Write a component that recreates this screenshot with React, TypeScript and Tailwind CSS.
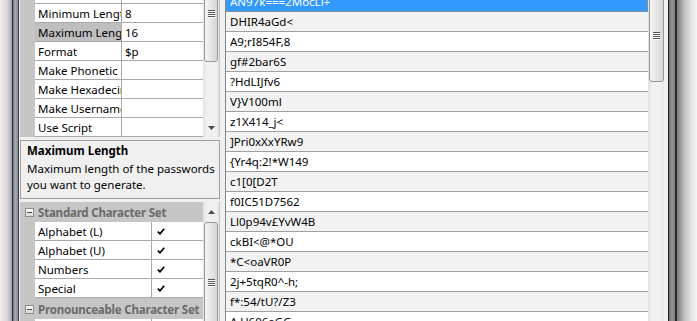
import React from 'react';

const passwords = [
  'AN97k===2MocLi+',
  'DHIR4aGd<',
  'A9;rI854F,8',
  'gf#2bar6S',
  '?HdLIJfv6',
  'V}V100ml',
  'z1X414_j<',
  ']Pri0xXxYRw9',
  '{Yr4q:2!*W149',
  'c1[0[D2T',
  'f0IC51D7562',
  'Ll0p94v£YvW4B',
  'ckBI<@*OU',
  '*C<oaVR0P',
  '2j+5tqR0^-h;',
  'f*:54/tU?/Z3',
  'A.U606aGG',
];

const general = [
  { name: '', value: '' },
  { name: 'Minimum Length', value: '8' },
  { name: 'Maximum Length', value: '16', selected: true },
  { name: 'Format', value: '$p' },
  { name: 'Make Phonetic', value: '' },
  { name: 'Make Hexadecimal', value: '' },
  { name: 'Make Username', value: '' },
  { name: 'Use Script', value: '' },
];

function Grip() {
  return (
    <div className="flex flex-col gap-px">
      {[0, 1, 2, 3].map((i) => (
        <div key={i} className="h-px w-[7px] bg-[#555] shadow-[0_1px_0_#fff]" />
      ))}
    </div>
  );
}

function Thumb({ className }: { className: string }) {
  return (
    <div
      className={`flex shrink-0 items-center justify-center rounded-[3px] border border-[#979797] bg-[linear-gradient(to_right,#f5f5f5,#e8e8e8_45%,#d6d6d6)] ${className}`}
    >
      <Grip />
    </div>
  );
}

function Arrow({ up }: { up?: boolean }) {
  return (
    <svg width="7" height="4" viewBox="0 0 7 4">
      <path d={up ? 'M0 4 L3.5 0 L7 4 Z' : 'M0 0 L3.5 4 L7 0 Z'} fill="#4d4d4d" />
    </svg>
  );
}

const track =
  'bg-[linear-gradient(to_right,#e3e3e3,#f1f1f1_25%,#f1f1f1_75%,#e7e7e7)]';

function Check() {
  return (
    <svg width="8" height="7" viewBox="0 0 8 7">
      <path d="M0.8 3.6 L3 5.8 L7.2 0.8" fill="none" stroke="#000" strokeWidth="1.7" />
    </svg>
  );
}

function Category({ label }: { label: string }) {
  return (
    <div className="flex h-[20px] shrink-0 items-center bg-[#c6c6c6]">
      <div className="ml-[5px] flex h-[9px] w-[9px] shrink-0 items-center justify-center border border-[#8e8e8e] bg-[linear-gradient(#fbfbfb,#dcdcdc)]">
        <div className="h-px w-[5px] bg-[#4a4a4a]" />
      </div>
      <span className="ml-[4px] whitespace-nowrap font-bold tracking-[-0.2px] text-[#6b6b6b]">{label}</span>
    </div>
  );
}

function CheckRow({ name }: { name: string }) {
  return (
    <div className="flex h-[19px] shrink-0">
      <div className="w-[15px] shrink-0 bg-[#c6c6c6]" />
      <div className="flex w-[117px] shrink-0 items-center border-r border-b border-[#a9a9a9] bg-white pl-[3px]">
        {name}
      </div>
      <div className="flex flex-1 items-center border-b border-[#a9a9a9] bg-white pl-[5px]">
        <Check />
      </div>
    </div>
  );
}

export default function App() {
  return (
    <div className="flex h-[321px] w-[697px] overflow-hidden bg-white text-[11.5px] leading-[15px] text-black font-['Noto_Sans',sans-serif]">
      {/* left shadow + frame */}
      <div className="w-[12px] shrink-0 bg-[linear-gradient(to_right,#eeeeee,#d8d8d8_60%,#a4a4a4)]" />
      <div className="w-px shrink-0 bg-[#2b2b2b]" />
      <div className="w-[5px] shrink-0 bg-[linear-gradient(to_right,#6f7684,#a3a9b3,#858b96)]" />
      <div className="w-px shrink-0 bg-[#3c3c3c]" />

      {/* client area */}
      <div className="flex w-[649px] shrink-0 bg-[#f0f0f0] pl-px">
        {/* left panel */}
        <div className="flex w-[200px] shrink-0 flex-col">
          {/* general grid */}
          <div className="flex h-[137px] shrink-0">
            <div className="flex flex-1 flex-col overflow-hidden">
              {general.map((r, i) => (
                <div key={i} className={`flex h-[19px] shrink-0 ${i === 0 ? 'mt-[-15px]' : ''}`}>
                  <div className="w-[15px] shrink-0 bg-[#c6c6c6]" />
                  <div
                    className={`flex w-[87px] shrink-0 items-center overflow-hidden whitespace-nowrap border-r border-b border-[#a9a9a9] pl-[3px] ${
                      r.selected ? 'bg-[#bfbfbf]' : 'bg-white'
                    }`}
                  >
                    {r.name}
                  </div>
                  <div className="flex flex-1 items-center border-b border-[#a9a9a9] bg-white pl-[3px]">
                    {r.value}
                  </div>
                </div>
              ))}
            </div>
            <div className={`flex w-[16px] shrink-0 flex-col overflow-hidden ${track}`}>
              <Thumb className="mt-[-36px] ml-px h-[98px] w-[14px]" />
              <div className="flex-1" />
              <div className="flex h-[19px] items-center justify-center">
                <Arrow />
              </div>
            </div>
            <div className="w-px shrink-0 bg-[#c4c4c4]" />
          </div>

          {/* description */}
          <div className="mt-[3px] h-[59px] shrink-0 whitespace-nowrap border border-[#a0a0a0] px-[6px] pt-[2px]">
            <div className="font-bold">Maximum Length</div>
            <div className="mt-[3px] leading-[16px]">
              Maximum length of the passwords
              <br />
              you want to generate.
            </div>
          </div>

          {/* character set grid */}
          <div className="mt-[3px] flex min-h-0 flex-1">
            <div className="flex flex-1 flex-col overflow-hidden">
              <Category label="Standard Character Set" />
              <CheckRow name="Alphabet (L)" />
              <CheckRow name="Alphabet (U)" />
              <CheckRow name="Numbers" />
              <CheckRow name="Special" />
              <div className="h-px shrink-0 bg-[#c6c6c6]" />
              <Category label="Pronounceable Character Set" />
              <div className="flex h-[19px] shrink-0">
                <div className="w-[15px] shrink-0 bg-[#c6c6c6]" />
                <div className="w-[117px] shrink-0 border-r border-[#a9a9a9] bg-white" />
                <div className="flex-1 bg-white" />
              </div>
            </div>
            <div className={`flex w-[16px] shrink-0 flex-col overflow-hidden ${track}`}>
              <div className="flex h-[20px] shrink-0 items-center justify-center">
                <Arrow up />
              </div>
              <Thumb className="ml-px h-[120px] w-[14px]" />
            </div>
            <div className="w-px shrink-0 bg-[#c4c4c4]" />
          </div>
        </div>

        {/* password list */}
        <div className="ml-[5px] flex w-[439px] shrink-0 border-l border-[#828790] bg-white">
          <div className="flex flex-1 flex-col overflow-hidden">
            {passwords.map((p, i) => (
              <div
                key={p}
                className={`flex h-[20px] shrink-0 items-center whitespace-nowrap pl-[4px] ${
                  i === 0
                    ? 'mt-[-8px] border-r border-b border-dotted border-[#c98b3e] bg-[#3399ff] text-white'
                    : `border-b border-[#a0a0a0] ${i % 2 === 1 ? 'bg-[#f3f3f3]' : 'bg-white'}`
                }`}
              >
                {p}
              </div>
            ))}
          </div>
          <div className={`flex w-[16px] shrink-0 flex-col overflow-hidden pl-px ${track}`}>
            <Thumb className="mt-[-12px] h-[94px] w-[15px]" />
          </div>
        </div>
        <div className="w-[4px] shrink-0" />
      </div>

      {/* right frame + shadow */}
      <div className="w-px shrink-0 bg-[#1e1e1e]" />
      <div className="w-[6px] shrink-0 bg-[linear-gradient(to_right,#6c6c6c,#9a9794,#7a7a7a)]" />
      <div className="w-[2px] shrink-0 bg-[#2a2a2a]" />
      <div className="flex-1 bg-[linear-gradient(to_right,#7a7a7a,#bdbdbd_35%,#e9e9e9_75%,#f6f6f6)]" />
    </div>
  );
}
